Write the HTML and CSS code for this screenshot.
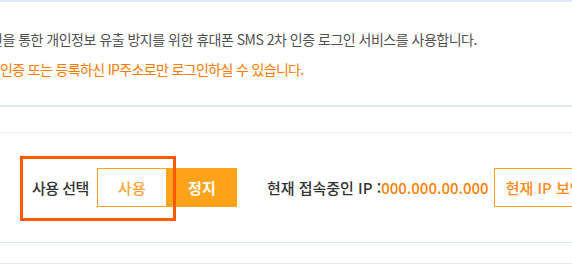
FILE: index.html
```html
<!DOCTYPE html>
<html lang="ko">
<head>
    <meta charset="UTF-8">
    <meta name="viewport" content="width=device-width, initial-scale=1.0">
    <title>SMS 2차 인증 설정</title>
    <link rel="stylesheet" href="styles.css">
</head>
<body>
    <div class="page">
        <div class="notice">
            <p class="notice-text first">인을 통한 개인정보 유출 방지를 위한 휴대폰 SMS 2차 인증 로그인 서비스를 사용합니다.</p>
            <p class="notice-text warn">인증 또는 등록하신 IP주소로만 로그인하실 수 있습니다.</p>
        </div>

        <div class="setting">
            <div class="setting-row">
                <span class="label">사용 선택</span>
                <div class="toggle">
                    <button class="toggle-btn on">사용</button>
                    <button class="toggle-btn off">정지</button>
                </div>
                <span class="ip-label">현재 접속중인 IP :</span>
                <span class="ip-value">000.000.00.000</span>
                <button class="ip-button">현재 IP 보안IP로 등록</button>
            </div>
            <div class="highlight"></div>
        </div>
        <div class="bottom-line"></div>
    </div>
</body>
</html>
```

FILE: styles.css
```css
body {
    margin: 0;
    overflow: hidden;
    background: #fff;
    font-family: "Noto Sans CJK KR", "Noto Sans", sans-serif;
    color: #444;
}

.page {
    width: 900px;
    white-space: nowrap;
}

.notice {
    border-top: 2px solid #dfe9f8;
    border-bottom: 2px solid #dfe9f8;
    padding: 22px 0 21px;
}

.notice-text {
    margin: 0;
    font-size: 14px;
    letter-spacing: -0.5px;
    line-height: 30px;
    color: #505050;
}

.notice-text.first {
    text-indent: -10px;
}

.notice-text.warn {
    color: #ff7a00;
    letter-spacing: -0.65px;
}

.setting {
    position: relative;
    margin-top: 25px;
    border-top: 1px solid #e4ecf7;
    border-bottom: 1px solid #dde8f9;
    padding: 35px 0 35px 32px;
}

.setting-row {
    display: flex;
    align-items: center;
    height: 39px;
}

.label {
    font-size: 15px;
    font-weight: 500;
    letter-spacing: -0.5px;
    color: #333;
    margin-right: 8px;
}

.toggle {
    display: flex;
    margin-right: 30px;
}

.toggle-btn {
    width: 70px;
    height: 39px;
    font-family: inherit;
    font-size: 15px;
    font-weight: 500;
    border: 1px solid #ffa31a;
    background: #fff;
    color: #ffa33a;
    padding: 0;
}

.toggle-btn.off {
    background: #ffa31a;
    color: #fff;
    font-weight: 700;
}

.ip-label {
    font-size: 15px;
    font-weight: 500;
    color: #333;
}

.ip-value {
    font-size: 15px;
    font-weight: 500;
    color: #ff7f00;
    margin-right: 5px;
}

.ip-button {
    height: 39px;
    padding: 0 11px;
    font-family: inherit;
    font-size: 15px;
    font-weight: 500;
    border: 1px solid #ffa31a;
    background: #fff;
    color: #ff8a1a;
}

.highlight {
    position: absolute;
    left: 20px;
    top: 23px;
    width: 156px;
    height: 65px;
    box-sizing: border-box;
    border: 3px solid #ff5a00;
}

.bottom-line {
    margin-top: 20px;
    border-top: 1px solid #e6e9ee;
}
```
